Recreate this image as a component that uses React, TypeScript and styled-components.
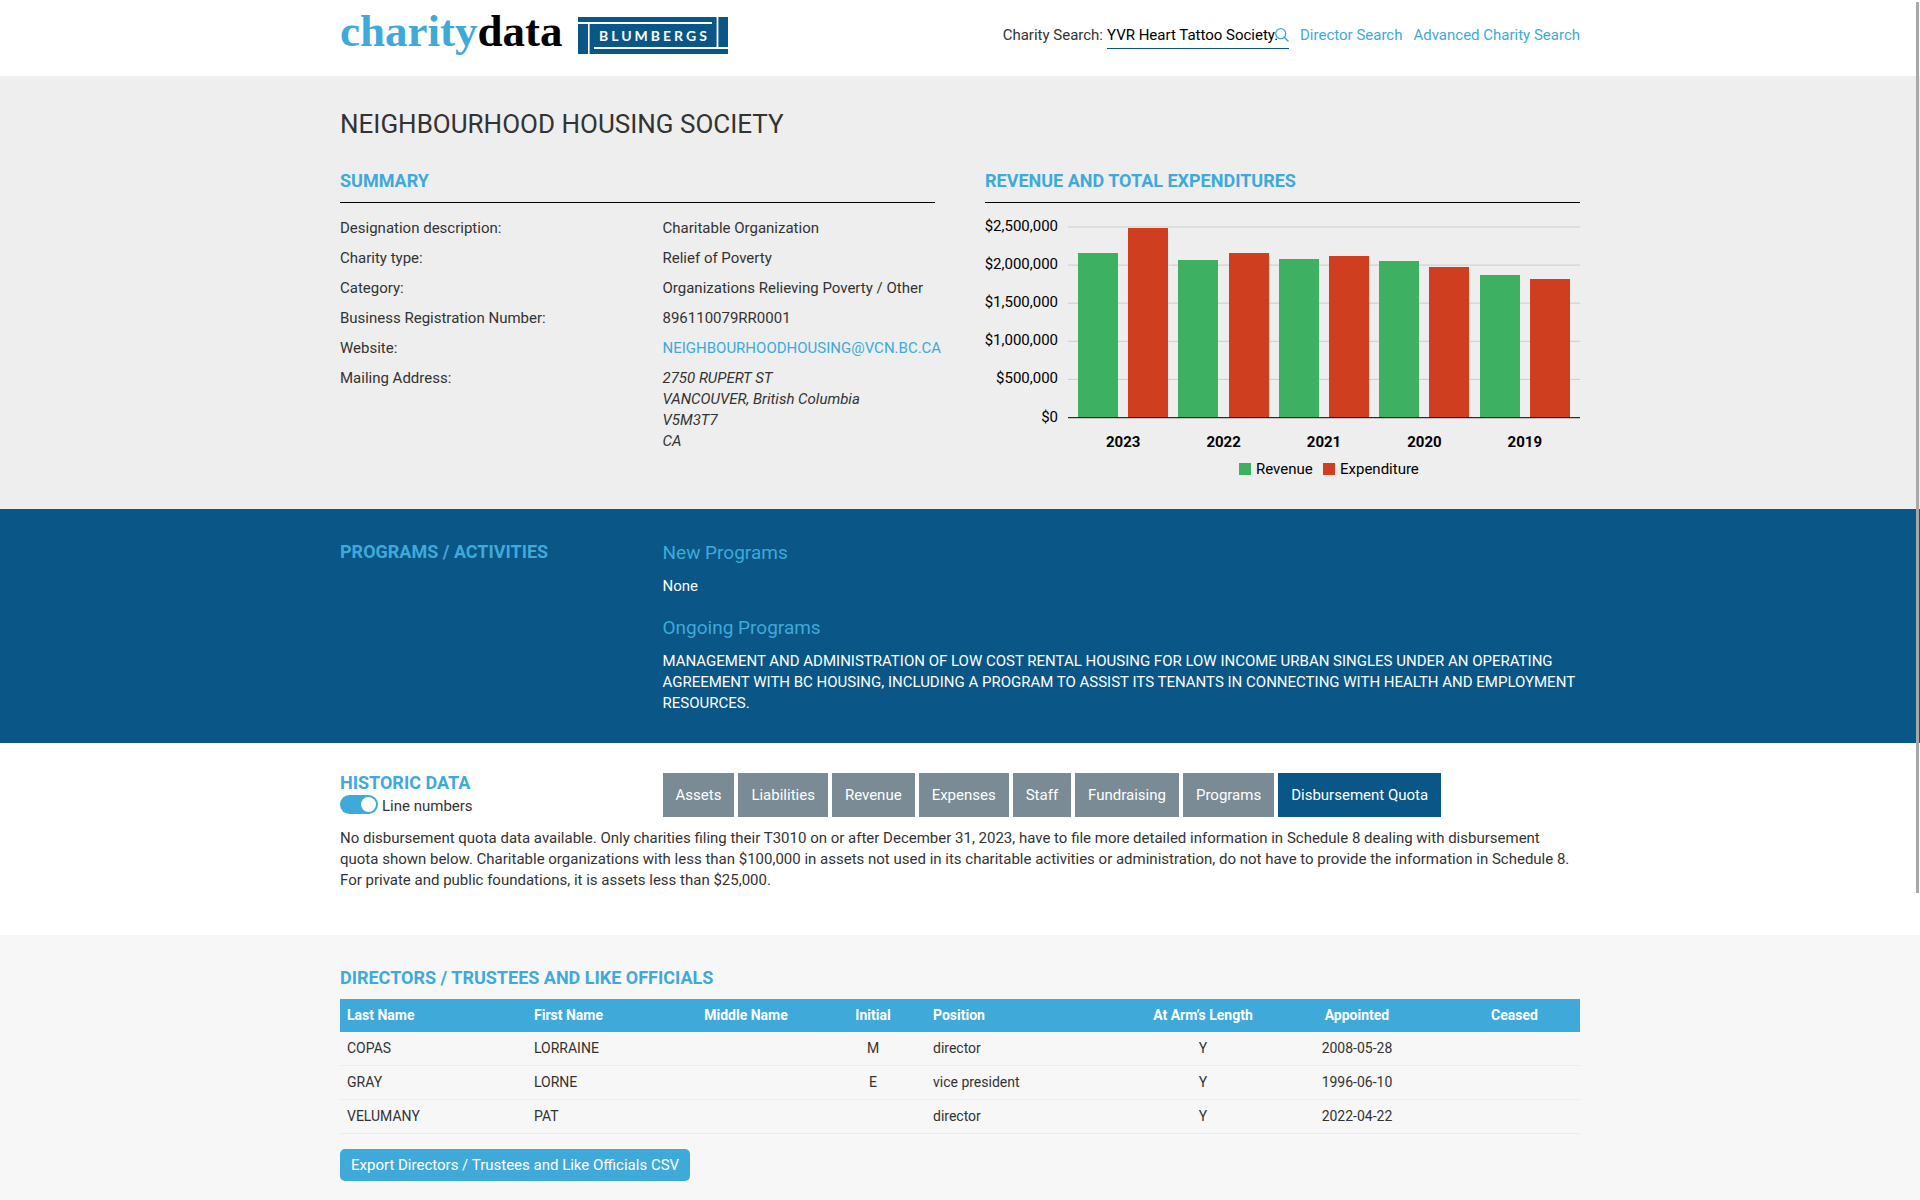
import React, { useState } from "react";
import styled, { createGlobalStyle } from "styled-components";

const sky = "#3fa9d9";
const navy = "#095687";
const sans = `Roboto, "Liberation Sans", sans-serif`;

const GlobalStyle = createGlobalStyle`
  *, *::before, *::after { box-sizing: border-box; }
  body {
    margin: 0;
    background: #fff;
    color: #333;
    font-family: ${sans};
    font-size: 15px;
    line-height: 21px;
  }
  h1, h2, h3, p, dl, dd { margin: 0; }
  button, input { font: inherit; }
`;

const Page = styled.div`
  min-height: 100vh;
  display: flex;
  flex-direction: column;
`;

const Container = styled.div`
  width: 100%;
  max-width: 1240px;
  margin: 0 auto;
`;

const Band = styled.section<{ $bg: string; $bottom?: number; $grow?: boolean }>`
  background: ${(p) => p.$bg};
  padding: 30px 20px ${(p) => p.$bottom ?? 30}px;
  flex-grow: ${(p) => (p.$grow ? 1 : 0)};
`;

const Header = styled.header`
  padding: 0 20px;
`;

const HeaderRow = styled(Container)`
  display: flex;
  justify-content: space-between;
  height: 76px;
`;

const Logos = styled.div`
  display: flex;
  align-items: flex-start;
  gap: 16px;
`;

const Wordmark = styled.a`
  color: #000;
  font-family: "Liberation Serif", serif;
  font-size: 45px;
  font-weight: 700;
  line-height: 62px;
  text-decoration: none;

  span { color: ${sky}; }
`;

const PartnerLink = styled.a`
  display: block;
  padding-top: 17px;

  svg { display: block; }
`;

const Nav = styled.nav`
  display: flex;
  align-items: flex-start;
  gap: 11px;
  padding-top: 25px;
`;

const Link = styled.a`
  color: ${sky};
  text-decoration: none;
`;

const SearchForm = styled.form`
  display: flex;
  gap: 4px;
`;

const SearchField = styled.div`
  position: relative;
  width: 182px;
`;

const SearchInput = styled.input`
  display: block;
  width: 100%;
  height: 24px;
  padding: 0 12px 3px 0;
  border: 0;
  border-bottom: 1px solid ${navy};
  background: none;
  color: #000;
  outline: none;
`;

const SearchButton = styled.button`
  position: absolute;
  right: 0;
  top: 3px;
  padding: 0;
  border: 0;
  background: none;
  color: ${sky};

  svg { display: block; }
`;

const Title = styled.h1`
  margin-bottom: 26px;
  font-size: 26px;
  font-weight: 400;
  line-height: 36px;
`;

const Heading = styled.h2<{ $ruled?: boolean }>`
  color: ${sky};
  font-size: 18px;
  font-weight: 700;
  line-height: 25px;
  ${(p) => p.$ruled && "padding-bottom: 9px; border-bottom: 1px solid #000;"}
`;

const TwoColumns = styled.div`
  display: grid;
  grid-template-columns: 1fr 1fr;
  gap: 50px;
`;

const SummaryList = styled.dl`
  display: grid;
  grid-template-columns: minmax(0, 1fr) minmax(0, 1fr);
  column-gap: 50px;
  row-gap: 9px;
  padding-top: 15px;
`;

const Address = styled.address`
  white-space: pre-line;
`;

const Chart = styled.svg`
  display: block;
  width: 100%;
  height: auto;
  font-family: ${sans};
  font-size: 15px;
`;

const QuarterGrid = styled.div`
  display: grid;
  grid-template-columns: repeat(4, minmax(0, 1fr));
  column-gap: 50px;
`;

const Programs = styled.div`
  grid-column: 2 / -1;
  display: grid;
  gap: 17px;
  color: #fff;
`;

const SubHeading = styled.h3`
  margin-bottom: 10px;
  color: ${sky};
  font-size: 19px;
  font-weight: 400;
  line-height: 27px;
`;

const CompactHeading = styled(Heading)`
  line-height: 20px;
`;

const Switch = styled.label`
  display: flex;
  align-items: flex-start;
  gap: 4px;
  padding-top: 2px;
  line-height: 23px;
`;

const SwitchInput = styled.input`
  appearance: none;
  width: 38px;
  height: 19px;
  margin: 0;
  padding: 2px;
  border-radius: 10px;
  background: #ccc;
  display: flex;

  &::before {
    content: "";
    width: 15px;
    height: 15px;
    border-radius: 50%;
    background: #fff;
  }
  &:checked {
    background: ${sky};
    justify-content: flex-end;
  }
`;

const Tabs = styled.div`
  grid-column: 2 / -1;
  display: flex;
  gap: 4px;
`;

const Tab = styled.button<{ $active: boolean }>`
  height: 44px;
  padding: 0 13px;
  border: 0;
  background: ${(p) => (p.$active ? navy : "#7a8b95")};
  color: #fff;
`;

const Notice = styled.p`
  padding-top: 10px;
`;

const Table = styled.table`
  width: 100%;
  margin: 9px 0 15px;
  border-collapse: separate;
  border-spacing: 0;
  table-layout: fixed;
  font-size: 14px;
  line-height: 19px;
`;

type Align = "left" | "center";

const Th = styled.th<{ $align: Align }>`
  padding: 7px;
  background: ${sky};
  color: #fff;
  font-weight: 700;
  text-align: ${(p) => p.$align};
`;

const Td = styled.td<{ $align: Align }>`
  height: 34px;
  padding: 7px;
  border-bottom: 1px solid #ededed;
  text-align: ${(p) => p.$align};
`;

const ExportButton = styled.button`
  display: block;
  height: 32px;
  padding: 0 11px;
  border: 0;
  border-radius: 5px;
  background: ${sky};
  color: #fff;
`;

const ScrollThumb = styled.div`
  position: fixed;
  top: 2px;
  right: 1px;
  width: 3px;
  height: 891px;
  background: #a8a8a8;
`;

const finances = [
  { year: 2023, revenue: 2155000, expenditure: 2485000 },
  { year: 2022, revenue: 2065000, expenditure: 2155000 },
  { year: 2021, revenue: 2080000, expenditure: 2118000 },
  { year: 2020, revenue: 2052000, expenditure: 1975000 },
  { year: 2019, revenue: 1868000, expenditure: 1816000 },
];

const plot = { left: 83, right: 595, top: 24, bottom: 214.5 };
const green = "#3db061";
const red = "#ce3e1f";

function FinanceChart() {
  const y = (v: number) =>
    plot.bottom - (v / 2500000) * (plot.bottom - plot.top);
  const pitch = (plot.right - plot.left - 10) / 10;
  const ticks = [0, 500000, 1000000, 1500000, 2000000, 2500000];
  const bar = (slot: number, value: number, fill: string) => {
    const x = Math.round(plot.left + 10 + slot * pitch);
    const top = Math.round(y(value));
    return (
      <rect x={x} y={top} width={40} height={plot.bottom - top} fill={fill} />
    );
  };
  return (
    <Chart viewBox="0 0 595 276" role="img" aria-label="Revenue and expenditure by year">
      {ticks.map((t) => (
        <g key={t}>
          {t > 0 && (
            <line x1={plot.left} x2={plot.right} y1={y(t)} y2={y(t)} stroke="#ccc" />
          )}
          <text x={73} y={Math.round(y(t) + 4)} textAnchor="end">
            ${t.toLocaleString("en-US")}
          </text>
        </g>
      ))}
      {finances.map((f, i) => (
        <g key={f.year}>
          {bar(i * 2, f.revenue, green)}
          {bar(i * 2 + 1, f.expenditure, red)}
          <text
            x={plot.left + 5 + (i * 2 + 1) * pitch}
            y={244}
            textAnchor="middle"
            fontWeight={700}
          >
            {f.year}
          </text>
        </g>
      ))}
      <line x1={plot.left} x2={plot.right} y1={214.7} y2={214.7} stroke="#000" />
      <rect x={254} y={260} width={12} height={12} fill={green} />
      <text x={271} y={271}>Revenue</text>
      <rect x={338} y={260} width={12} height={12} fill={red} />
      <text x={355} y={271}>Expenditure</text>
    </Chart>
  );
}

function BlumbergsLogo() {
  return (
    <svg width="150" height="37" viewBox="0 0 150 37" role="img" aria-label="Blumbergs">
      <rect width="150" height="37" fill={navy} />
      <g fill="#fff">
        <rect x="0" y="5" width="134" height="2" />
        <rect x="10" y="7" width="1.6" height="30" />
        <rect x="16" y="30" width="134" height="2" />
        <rect x="138.6" y="0" width="1.8" height="30" />
        <text
          x="21"
          y="24"
          fontFamily="Lato, sans-serif"
          fontSize="14"
          fontWeight="700"
          letterSpacing="3"
        >
          BLUMBERGS
        </text>
      </g>
    </svg>
  );
}

const summary: [string, React.ReactNode][] = [
  ["Designation description:", "Charitable Organization"],
  ["Charity type:", "Relief of Poverty"],
  ["Category:", "Organizations Relieving Poverty / Other"],
  ["Business Registration Number:", "896110079RR0001"],
  ["Website:", <Link href="#website">NEIGHBOURHOODHOUSING@VCN.BC.CA</Link>],
  [
    "Mailing Address:",
    <Address>{"2750 RUPERT ST\nVANCOUVER, British Columbia\nV5M3T7\nCA"}</Address>,
  ],
];

const tabs = [
  "Assets",
  "Liabilities",
  "Revenue",
  "Expenses",
  "Staff",
  "Fundraising",
  "Programs",
  "Disbursement Quota",
];

const columns: { name: string; share: number; align: Align }[] = [
  { name: "Last Name", share: 187, align: "left" },
  { name: "First Name", share: 145, align: "left" },
  { name: "Middle Name", share: 148, align: "center" },
  { name: "Initial", share: 106, align: "center" },
  { name: "Position", share: 215, align: "left" },
  { name: "At Arm’s Length", share: 124, align: "center" },
  { name: "Appointed", share: 184, align: "center" },
  { name: "Ceased", share: 131, align: "center" },
];

const directors = [
  ["COPAS", "LORRAINE", "", "M", "director", "Y", "2008-05-28", ""],
  ["GRAY", "LORNE", "", "E", "vice president", "Y", "1996-06-10", ""],
  ["VELUMANY", "PAT", "", "", "director", "Y", "2022-04-22", ""],
];

export default function App() {
  const [tab, setTab] = useState("Disbursement Quota");
  const total = columns.reduce((sum, c) => sum + c.share, 0);

  return (
    <Page>
      <GlobalStyle />
      <Header>
        <HeaderRow>
          <Logos>
            <Wordmark href="#home">
              <span>charity</span>data
            </Wordmark>
            <PartnerLink href="#blumbergs">
              <BlumbergsLogo />
            </PartnerLink>
          </Logos>
          <Nav>
            <SearchForm onSubmit={(e) => e.preventDefault()}>
              <label htmlFor="charity-search">Charity Search:</label>
              <SearchField>
                <SearchInput
                  id="charity-search"
                  type="text"
                  defaultValue="YVR Heart Tattoo Society."
                />
                <SearchButton type="submit" aria-label="Search">
                  <svg width="14" height="14" viewBox="0 0 14 14" fill="none" stroke="currentColor">
                    <circle cx="5.7" cy="5.7" r="5" strokeWidth="1.3" />
                    <path d="M9.3 9.3 L13.5 13.5" strokeWidth="1.5" />
                  </svg>
                </SearchButton>
              </SearchField>
            </SearchForm>
            <Link href="#directors">Director Search</Link>
            <Link href="#advanced">Advanced Charity Search</Link>
          </Nav>
        </HeaderRow>
      </Header>

      <Band $bg="#eee">
        <Container>
          <Title>NEIGHBOURHOOD HOUSING SOCIETY</Title>
          <TwoColumns>
            <div>
              <Heading $ruled>SUMMARY</Heading>
              <SummaryList>
                {summary.map(([label, value]) => (
                  <React.Fragment key={label}>
                    <dt>{label}</dt>
                    <dd>{value}</dd>
                  </React.Fragment>
                ))}
              </SummaryList>
            </div>
            <div>
              <Heading $ruled>REVENUE AND TOTAL EXPENDITURES</Heading>
              <FinanceChart />
            </div>
          </TwoColumns>
        </Container>
      </Band>

      <Band $bg={navy} $bottom={29}>
        <Container>
          <QuarterGrid>
            <Heading>PROGRAMS / ACTIVITIES</Heading>
            <Programs>
              <div>
                <SubHeading>New Programs</SubHeading>
                <p>None</p>
              </div>
              <div>
                <SubHeading>Ongoing Programs</SubHeading>
                <p>
                  MANAGEMENT AND ADMINISTRATION OF LOW COST RENTAL HOUSING FOR
                  LOW INCOME URBAN SINGLES UNDER AN OPERATING AGREEMENT WITH BC
                  HOUSING, INCLUDING A PROGRAM TO ASSIST ITS TENANTS IN
                  CONNECTING WITH HEALTH AND EMPLOYMENT RESOURCES.
                </p>
              </div>
            </Programs>
          </QuarterGrid>
        </Container>
      </Band>

      <Band $bg="#fff" $bottom={44}>
        <Container>
          <QuarterGrid>
            <div>
              <CompactHeading>HISTORIC DATA</CompactHeading>
              <Switch>
                <SwitchInput type="checkbox" role="switch" defaultChecked />
                <span>Line numbers</span>
              </Switch>
            </div>
            <Tabs role="tablist">
              {tabs.map((name) => (
                <Tab
                  key={name}
                  type="button"
                  role="tab"
                  aria-selected={tab === name}
                  $active={tab === name}
                  onClick={() => setTab(name)}
                >
                  {name}
                </Tab>
              ))}
            </Tabs>
          </QuarterGrid>
          <Notice>
            No disbursement quota data available. Only charities filing their
            T3010 on or after December 31, 2023, have to file more detailed
            information in Schedule 8 dealing with disbursement quota shown
            below. Charitable organizations with less than $100,000 in assets
            not used in its charitable activities or administration, do not have
            to provide the information in Schedule 8. For private and public
            foundations, it is assets less than $25,000.
          </Notice>
        </Container>
      </Band>

      <Band $bg="#f7f7f7" $bottom={18} $grow>
        <Container>
          <Heading>DIRECTORS / TRUSTEES AND LIKE OFFICIALS</Heading>
          <Table>
            <colgroup>
              {columns.map((c) => (
                <col key={c.name} style={{ width: `${(c.share / total) * 100}%` }} />
              ))}
            </colgroup>
            <thead>
              <tr>
                {columns.map((c) => (
                  <Th key={c.name} scope="col" $align={c.align}>
                    {c.name}
                  </Th>
                ))}
              </tr>
            </thead>
            <tbody>
              {directors.map((row) => (
                <tr key={row[0]}>
                  {row.map((cell, i) => (
                    <Td key={columns[i].name} $align={columns[i].align}>
                      {cell}
                    </Td>
                  ))}
                </tr>
              ))}
            </tbody>
          </Table>
          <ExportButton type="button">
            Export Directors / Trustees and Like Officials CSV
          </ExportButton>
        </Container>
      </Band>
      <ScrollThumb />
    </Page>
  );
}
